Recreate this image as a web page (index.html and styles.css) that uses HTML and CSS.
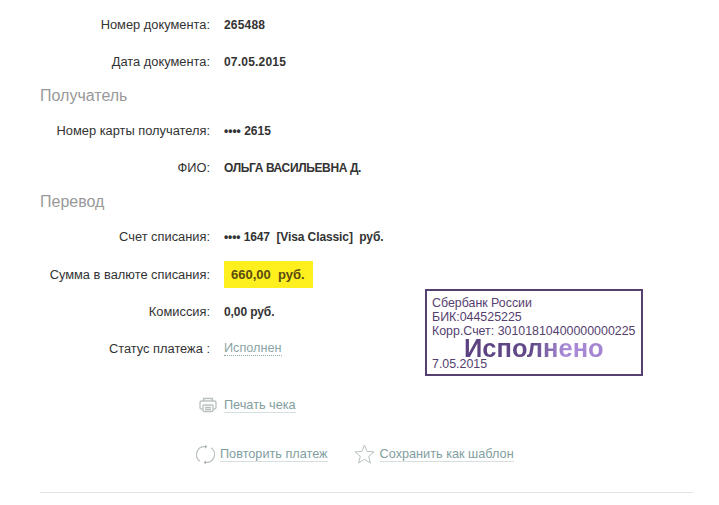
FILE: index.html
```html
<!DOCTYPE html>
<html lang="ru">
<head>
  <meta charset="UTF-8">
  <title>Детали платежа</title>
  <link rel="stylesheet" href="styles.css">
</head>
<body>
  <div class="container">
    <div class="row"><span class="label">Номер документа:</span><span class="value num">265488</span></div>
    <div class="row"><span class="label">Дата документа:</span><span class="value num">07.05.2015</span></div>

    <h3>Получатель</h3>
    <div class="row"><span class="label">Номер карты получателя:</span><span class="value">•••• 2615</span></div>
    <div class="row"><span class="label">ФИО:</span><span class="value caps">ОЛЬГА ВАСИЛЬЕВНА Д.</span></div>

    <h3>Перевод</h3>
    <div class="row"><span class="label">Счет списания:</span><span class="value tight">•••• 1647&nbsp; [Visa Classic]&nbsp; руб.</span></div>
    <div class="row sum-row"><span class="label">Сумма в валюте списания:</span><span class="value sum">660,00&nbsp; руб.</span></div>
    <div class="row"><span class="label">Комиссия:</span><span class="value tight">0,00 руб.</span></div>
    <div class="row"><span class="label">Статус платежа :</span><a class="status">Исполнен</a></div>

    <div class="actions print-action">
      <a class="action">
        <svg class="icon" width="18" height="16" viewBox="0 0 18 16" fill="none" stroke="#b9c2c0" stroke-width="1.3">
          <path d="M4.500 4V1.500h9V4"/>
          <path d="M4 12H2.500C1.500 12 1 11.500 1 10.500V5.500C1 4.500 1.500 4 2.500 4h13c1 0 1.500.5 1.500 1.500v5c0 1-.5 1.500-1.500 1.500H14"/>
          <rect x="4" y="8" width="10" height="6.500" rx="1"/>
          <path d="M6 10.500h6M6 12.500h6"/>
        </svg>
        <span class="link">Печать чека</span>
      </a>
    </div>

    <div class="actions repeat-action">
      <a class="action">
        <svg class="icon" width="19" height="21" viewBox="0 0 19 21" fill="none" stroke="#b9c2c0" stroke-width="1.200">
          <path d="M4 17.200A8 8 0 0 1 9 2.600"/>
          <path d="M15 3.800A8 8 0 0 1 10 18.400"/>
          <path d="M9 .8l2.400 1.900L9 4.500z" fill="#a9b2b0" stroke="none"/>
          <path d="M10 16.500l-2.400 1.900 2.400 1.900z" fill="#a9b2b0" stroke="none"/>
        </svg>
        <span class="link">Повторить платеж</span>
      </a>
      <a class="action save">
        <svg class="icon" width="21" height="20" viewBox="0 0 21 20" fill="none" stroke="#b9c2c0" stroke-width="1">
          <path d="M10.500 1l2.600 6.400 6.900.5-5.300 4.400 1.700 6.700-5.900-3.700-5.900 3.700 1.700-6.700L1 7.900l6.900-.5z"/>
        </svg>
        <span class="link">Сохранить как шаблон</span>
      </a>
    </div>

    <div class="bottom-line"></div>

    <div class="stamp">
      <div>Сбербанк России</div>
      <div>БИК:044525225</div>
      <div>Корр.Счет: 30101810400000000225</div>
      <div class="stamp-title">Исполнено</div>
      <div class="stamp-date">7.05.2015</div>
    </div>
  </div>
</body>
</html>
```

FILE: styles.css
```css
body {
  font-family: "Liberation Sans", Arial, sans-serif;
  font-size: 12px;
  margin: 0;
  background: #fff;
  color: #333;
}

.container {
  position: relative;
  width: 653px;
  margin-left: 40px;
  padding-top: 6px;
}

.row {
  display: flex;
  align-items: center;
  height: 37px;
}

.sum-row {
  height: 38px;
}

.label {
  width: 170px;
  margin-right: 14px;
  text-align: right;
  font-size: 12.85px;
}

.value {
  font-weight: bold;
}

.num {
  letter-spacing: 0.2px;
}

.caps {
  letter-spacing: -0.37px;
}

.tight {
  letter-spacing: -0.1px;
}

.sum {
  background: #fef01f;
  color: #5a4a10;
  padding: 0 8px 0 7px;
  line-height: 27px;
  font-size: 13px;
}

.status {
  color: #8aa5a5;
  border-bottom: 1px dotted #8aa5a5;
  line-height: 14px;
  font-size: 12.7px;
}

h3 {
  margin: 0;
  height: 32px;
  line-height: 32px;
  font-size: 16px;
  font-weight: normal;
  color: #999;
}

.actions {
  display: flex;
  align-items: center;
  height: 22px;
}

.print-action {
  margin-left: 159px;
  margin-top: 27px;
}

.repeat-action {
  margin-left: 156px;
  margin-top: 27px;
}

.action {
  display: flex;
  align-items: center;
  gap: 5px;
}

.print-action .action {
  gap: 7px;
}

.save {
  margin-left: 26px;
}

.link {
  color: #7f9e9e;
  border-bottom: 1px solid #d5dfdf;
  line-height: 14px;
  font-size: 12.7px;
}

.bottom-line {
  border-top: 1px solid #e3e6e6;
  margin-top: 27px;
}

.stamp {
  position: absolute;
  left: 385px;
  top: 289px;
  width: 204px;
  height: 78px;
  padding: 5px 5px 0;
  border: 2px solid #55406f;
  color: #55406f;
  line-height: 14px;
  font-size: 12.4px;
}

.stamp-title {
  font-size: 25.5px;
  font-weight: bold;
  line-height: 18px;
  margin-top: 1px;
  margin-left: 32px;
  width: 140px;
  background: linear-gradient(90deg, #5b4180 0%, #644a8a 50%, #ab8cd8 72%, #a283d0 100%);
  -webkit-background-clip: text;
  background-clip: text;
  color: transparent;
}

.stamp-date {
  margin-top: 0;
}
```
